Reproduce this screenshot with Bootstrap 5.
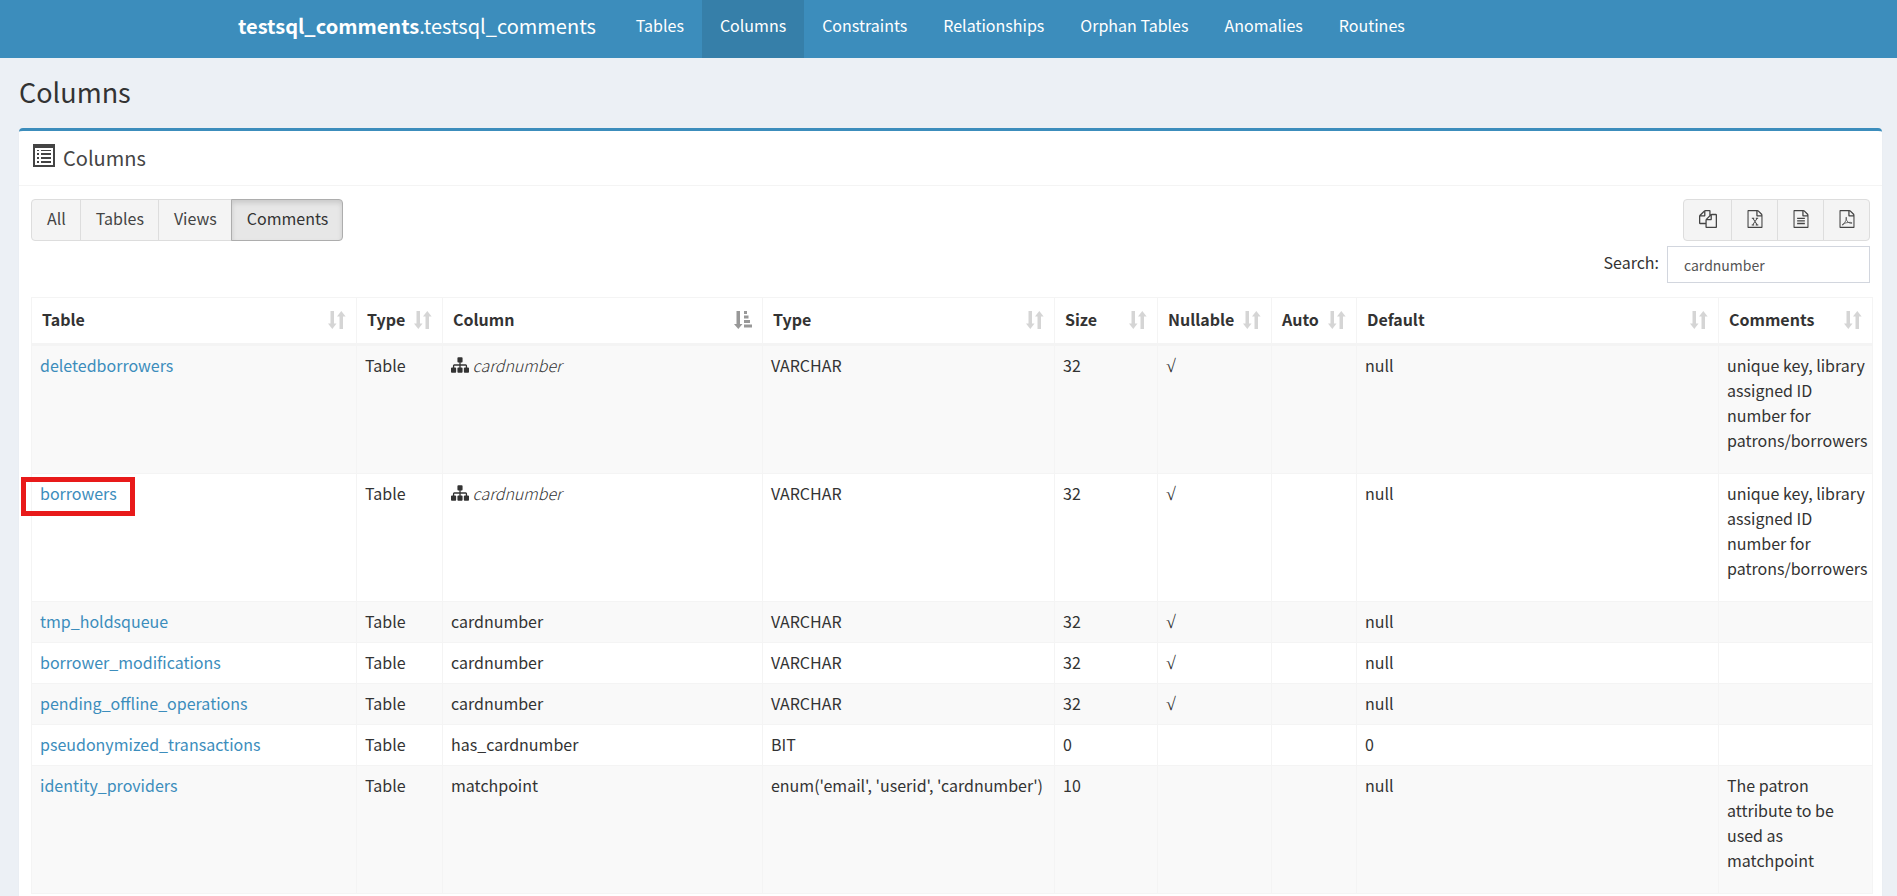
<!DOCTYPE html>
<html lang="en">
<head>
<meta charset="utf-8">
<meta name="viewport" content="width=device-width, initial-scale=1">
<title>Columns</title>
<link rel="stylesheet" href="https://cdn.jsdelivr.net/npm/bootstrap@5.3.0/dist/css/bootstrap.min.css">
<style>
body{background:#ecf0f5;color:#333;font-family:"Noto Sans CJK SC",sans-serif;font-size:16px;line-height:25px;overflow:hidden}
a{color:#3c8dbc;text-decoration:none}
.topbar{background:#3c8dbc;height:58px;--bs-navbar-padding-y:0}
.topbar .container{max-width:1463px;padding:0 20px}
.topbar .navbar-brand{color:#fff;font-size:20px;line-height:25px;padding:13px 0 20px;margin:0 22px 0 1px}
.topbar .navbar-nav .nav-link{color:#fff;padding:13px 18px 20px;line-height:25px}
.topbar .navbar-nav .nav-link.active{background:#367fa9;color:#fff}
.page{padding:19px 15px 0 19px}
.page h1{font-size:27px;line-height:30px;font-weight:400;margin:0 0 21px}
.panel{background:#fff;border-top:3px solid #3c8dbc;border-radius:4px;box-shadow:0 1px 1px rgba(0,0,0,.1)}
.panel-head{height:55px;padding:0 14px 2px;border-bottom:1px solid #f4f4f4;color:#444}
.panel-head h2{font-size:20px;line-height:25px;font-weight:400;margin:0}
.panel-body{padding:13px 12px}
.btn-tool{background:#f4f4f4;border:1px solid #ddd;color:#444;border-radius:4px;font-size:16px;line-height:25px;padding:6px 14px 9px 15px;height:42px}
.btn-tool.active,.btn-tool.active:hover{background:#e7e7e7;border-color:#adadad;color:#333;box-shadow:inset 0 3px 5px rgba(0,0,0,.125)}
.btn-tool svg{display:block}
.filter{margin-top:5px}
.search{width:203px;height:37px;border:1px solid #d2d6de;border-radius:0;color:#555;font-size:14px;padding:4px 16px}
.grid{width:calc(100% + 3px);table-layout:fixed;margin:14px 0 0;--bs-table-striped-bg:#f9f9f9;--bs-table-color:#333;--bs-table-striped-color:#333;border-color:#f4f4f4}
.grid th{padding:9px 10px 11px;font-weight:700;border-bottom:3px solid #f4f4f4;vertical-align:middle}
.grid td{padding:7px 0 8px 8px;vertical-align:top}
.grid td svg{vertical-align:-2px}
.grid tbody{border-top:0!important}
.grid p{margin:0 0 12px}
.sort{fill:#333;opacity:.2}
.sort.on{opacity:.5}
.root{font-family:"Liberation Serif",serif;font-size:18px;line-height:16px}
.c-name{width:325px}.c-kind{width:86px}.c-col{width:320px}.c-type{width:292px}.c-size{width:103px}.c-null{width:114px}.c-auto{width:85px}.c-note{width:154px}
.marked{position:relative}
.marked::after{content:"";position:absolute;left:-19px;right:-18px;top:-4px;bottom:-11px;border:5px solid #e81a1a;pointer-events:none}
</style>
</head>
<body>
<svg class="d-none" xmlns="http://www.w3.org/2000/svg">
<symbol id="i-sort" viewBox="0 0 18 18"><path d="M2.500 0h3.500v12.500h2.500L4.300 18 0 12.500h2.500zM11.500 18v-12.500h-2.500L13.300 0 17.600 5.500h-2.600V18z"/></symbol>
<symbol id="i-asc" viewBox="0 0 18 18"><path d="M2.500 0h3.500v13h2.500L4.300 18 0 13h2.500zM10 0h3v3h-3zM10 4.500h4.500v3H10zM10 9h6v3h-6zM10 13.500h8v3h-8z"/></symbol>
<symbol id="i-file" viewBox="128 0 1536 1792"><path d="M1596 380q28 28 48 76t20 88v1152q0 40-28 68t-68 28h-1344q-40 0-68-28t-28-68v-1600q0-40 28-68t68-28h896q40 0 88 20t76 48zm-444-244v376h376q-10-29-22-41l-313-313q-12-12-41-22zm384 1528v-1024h-416q-40 0-68-28t-28-68v-416h-768v1536h1280z"/></symbol>
<symbol id="i-map" viewBox="0 0 1792 1792"><path d="M1792 1248v320q0 40-28 68t-68 28h-320q-40 0-68-28t-28-68v-320q0-40 28-68t68-28h96v-192h-512v192h96q40 0 68 28t28 68v320q0 40-28 68t-68 28h-320q-40 0-68-28t-28-68v-320q0-40 28-68t68-28h96v-192h-512v192h96q40 0 68 28t28 68v320q0 40-28 68t-68 28h-320q-40 0-68-28t-28-68v-320q0-40 28-68t68-28h96v-192q0-52 38-90t90-38h512v-192h-96q-40 0-68-28t-28-68v-320q0-40 28-68t68-28h320q40 0 68 28t28 68v320q0 40-28 68t-68 28h-96v192h512q52 0 90 38t38 90v192h96q40 0 68 28t28 68z"/></symbol>
</svg>

<nav class="navbar navbar-expand topbar align-items-start">
  <div class="container justify-content-start align-items-start">
    <a class="navbar-brand" href="#"><b>testsql_comments</b>.testsql_comments</a>
    <ul class="navbar-nav">
      <li class="nav-item"><a class="nav-link" href="#">Tables</a></li>
      <li class="nav-item"><a class="nav-link active" href="#" aria-current="page">Columns</a></li>
      <li class="nav-item"><a class="nav-link" href="#">Constraints</a></li>
      <li class="nav-item"><a class="nav-link" href="#">Relationships</a></li>
      <li class="nav-item"><a class="nav-link" href="#">Orphan Tables</a></li>
      <li class="nav-item"><a class="nav-link" href="#">Anomalies</a></li>
      <li class="nav-item"><a class="nav-link" href="#">Routines</a></li>
    </ul>
  </div>
</nav>

<main class="page">
  <h1>Columns</h1>
  <section class="panel">
    <div class="panel-head d-flex align-items-center gap-2">
      <svg class="mb-1" width="22" height="23" viewBox="0 0 22 23" fill="#444"><path fill-rule="evenodd" d="M0 0h22v23H0zM2 4v17h18V4z"/><path d="M4 6h2v1H4zM8 6h10v1H8zM4 9h2v2H4zM8 9h10v2H8zM4 13h2v2H4zM8 13h10v2H8zM4 17h2v2H4zM8 17h10v2H8z"/></svg>
      <h2>Columns</h2>
    </div>
    <div class="panel-body">
      <div class="d-flex justify-content-between align-items-start">
        <div class="btn-group" role="group" aria-label="Filter">
          <button type="button" class="btn btn-tool">All</button>
          <button type="button" class="btn btn-tool">Tables</button>
          <button type="button" class="btn btn-tool">Views</button>
          <button type="button" class="btn btn-tool active">Comments</button>
        </div>
        <div class="d-flex flex-column align-items-end">
          <div class="btn-group" role="group" aria-label="Export">
            <button type="button" class="btn btn-tool" aria-label="Copy"><svg width="18" height="18" viewBox="0 0 1792 1792" fill="#444"><path d="M1696 384q40 0 68 28t28 68v1216q0 40-28 68t-68 28h-960q-40 0-68-28t-28-68v-288h-544q-40 0-68-28t-28-68v-672q0-40 20-88t48-76l408-408q28-28 76-48t88-20h416q40 0 68 28t28 68v328q68-40 128-40h416zm-544 213l-299 299h299v-299zm-640-384l-299 299h299v-299zm196 647l316-316v-416h-384v416q0 40-28 68t-68 28h-416v640h512v-256q0-40 20-88t48-76zm956 804v-1152h-384v416q0 40-28 68t-68 28h-416v640h896z"/></svg></button>
            <button type="button" class="btn btn-tool" aria-label="Excel"><svg width="16" height="18" viewBox="128 0 1536 1792" fill="#444"><use href="#i-file" x="128" y="0" width="1536" height="1792"/><path d="M580 770h240v100h-60l140 200 135-200h-60V770h235v100h-75l-190 270 205 300h75v100H965v-100h65l-140-215-145 215h65v100H570v-100h75l200-290-185-280h-80z"/></svg></button>
            <button type="button" class="btn btn-tool" aria-label="CSV"><svg width="16" height="18" viewBox="128 0 1536 1792" fill="#444"><use href="#i-file" x="128" y="0" width="1536" height="1792"/><path d="M512 768h768v128H512zM512 1024h768v128H512zM512 1280h768v128H512z"/></svg></button>
            <button type="button" class="btn btn-tool" aria-label="PDF"><svg width="16" height="18" viewBox="128 0 1536 1792" fill="#444"><use href="#i-file" x="128" y="0" width="1536" height="1792"/><path fill="none" stroke="#444" stroke-width="75" d="M420 1500q60-150 240-220 150-250 190-460 10-120-30-110-60 20-10 200 60 220 240 330 110 70 280 90 90-10 60-50-60-70-340-40-200 10-390 80-120 190-240 180z"/></svg></button>
          </div>
          <div class="filter d-flex align-items-start gap-2">
            <label for="q" class="pt-1">Search:</label>
            <input id="q" type="search" class="form-control search" value="cardnumber">
          </div>
        </div>
      </div>
      <table class="table table-bordered table-striped grid">
        <colgroup><col class="c-name"><col class="c-kind"><col class="c-col"><col class="c-type"><col class="c-size"><col class="c-null"><col class="c-auto"><col><col class="c-note"></colgroup>
        <thead><tr>
          <th><div class="d-flex justify-content-between align-items-center">Table<svg class="sort" width="18" height="18"><use href="#i-sort"/></svg></div></th>
          <th><div class="d-flex justify-content-between align-items-center">Type<svg class="sort" width="18" height="18"><use href="#i-sort"/></svg></div></th>
          <th><div class="d-flex justify-content-between align-items-center">Column<svg class="sort on" width="18" height="18"><use href="#i-asc"/></svg></div></th>
          <th><div class="d-flex justify-content-between align-items-center">Type<svg class="sort" width="18" height="18"><use href="#i-sort"/></svg></div></th>
          <th><div class="d-flex justify-content-between align-items-center">Size<svg class="sort" width="18" height="18"><use href="#i-sort"/></svg></div></th>
          <th><div class="d-flex justify-content-between align-items-center">Nullable<svg class="sort" width="18" height="18"><use href="#i-sort"/></svg></div></th>
          <th><div class="d-flex justify-content-between align-items-center">Auto<svg class="sort" width="18" height="18"><use href="#i-sort"/></svg></div></th>
          <th><div class="d-flex justify-content-between align-items-center">Default<svg class="sort" width="18" height="18"><use href="#i-sort"/></svg></div></th>
          <th><div class="d-flex justify-content-between align-items-center">Comments<svg class="sort" width="18" height="18"><use href="#i-sort"/></svg></div></th>
        </tr></thead>
        <tbody>
          <tr><td><a href="#">deletedborrowers</a></td><td>Table</td><td><svg width="18" height="18" fill="#333"><use href="#i-map"/></svg> <i class="fw-light">cardnumber</i></td><td>VARCHAR</td><td>32</td><td><span class="root">√</span></td><td></td><td>null</td><td><p>unique key, library assigned ID number for patrons/borrowers</p></td></tr>
          <tr><td><a href="#" class="marked">borrowers</a></td><td>Table</td><td><svg width="18" height="18" fill="#333"><use href="#i-map"/></svg> <i class="fw-light">cardnumber</i></td><td>VARCHAR</td><td>32</td><td><span class="root">√</span></td><td></td><td>null</td><td><p>unique key, library assigned ID number for patrons/borrowers</p></td></tr>
          <tr><td><a href="#">tmp_holdsqueue</a></td><td>Table</td><td>cardnumber</td><td>VARCHAR</td><td>32</td><td><span class="root">√</span></td><td></td><td>null</td><td></td></tr>
          <tr><td><a href="#">borrower_modifications</a></td><td>Table</td><td>cardnumber</td><td>VARCHAR</td><td>32</td><td><span class="root">√</span></td><td></td><td>null</td><td></td></tr>
          <tr><td><a href="#">pending_offline_operations</a></td><td>Table</td><td>cardnumber</td><td>VARCHAR</td><td>32</td><td><span class="root">√</span></td><td></td><td>null</td><td></td></tr>
          <tr><td><a href="#">pseudonymized_transactions</a></td><td>Table</td><td>has_cardnumber</td><td>BIT</td><td>0</td><td></td><td></td><td>0</td><td></td></tr>
          <tr><td><a href="#">identity_providers</a></td><td>Table</td><td>matchpoint</td><td>enum('email', 'userid', 'cardnumber')</td><td>10</td><td></td><td></td><td>null</td><td><p>The patron attribute to be used as matchpoint</p></td></tr>
        </tbody>
      </table>
    </div>
  </section>
</main>
<script src="https://cdn.jsdelivr.net/npm/bootstrap@5.3.0/dist/js/bootstrap.bundle.min.js"></script>
</body>
</html>
